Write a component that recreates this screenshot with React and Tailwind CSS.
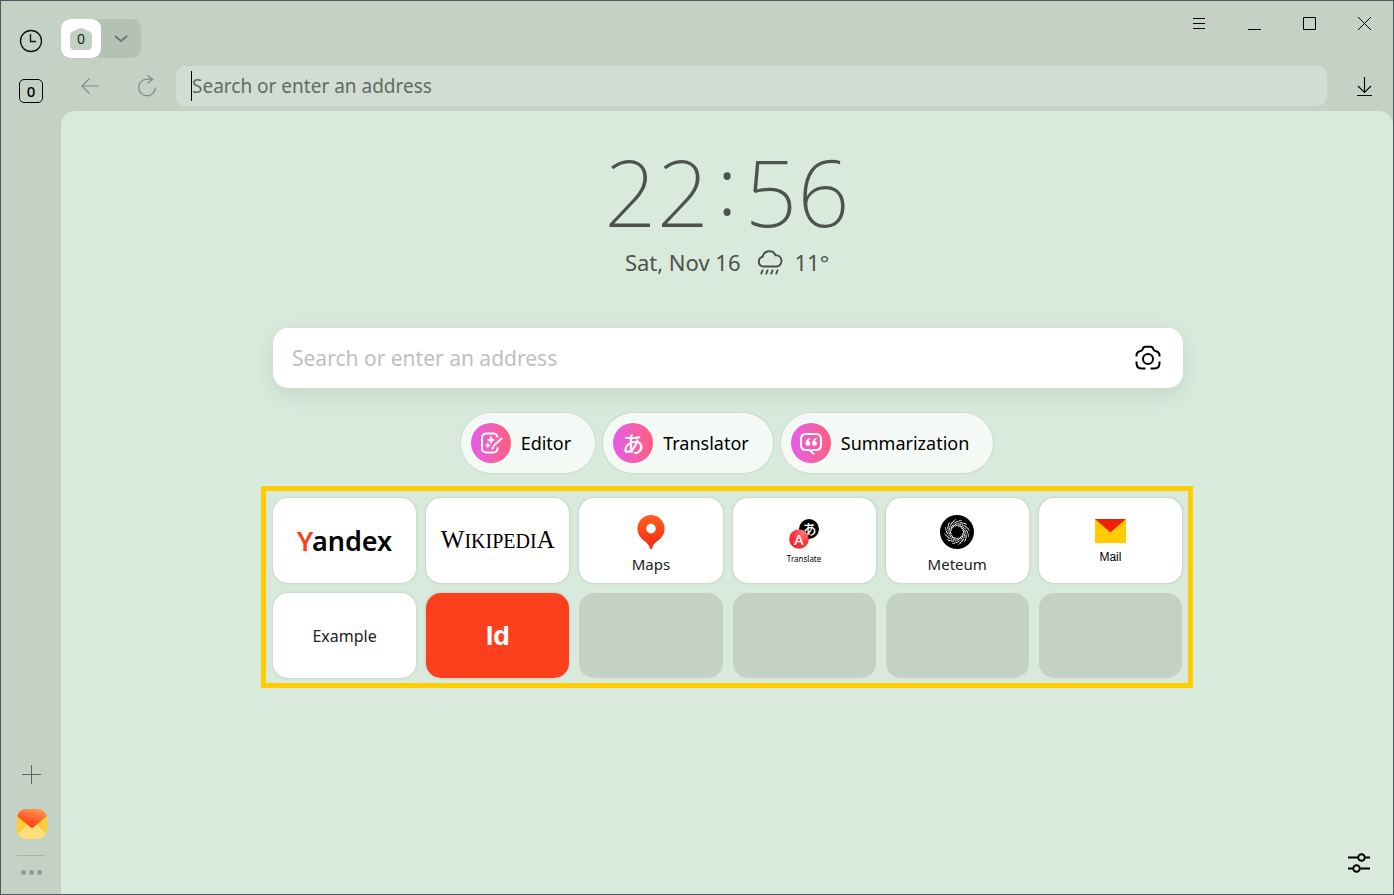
import React from "react";

const NOTO = "font-['Noto_Sans','Noto_Sans_CJK_JP',sans-serif]";

const services = [
  { name: "Editor", icon: <EditorIcon /> },
  { name: "Translator", icon: <span className="text-[22px] leading-6 font-medium text-white">あ</span> },
  { name: "Summarization", icon: <QuoteIcon /> },
];

const emptyTiles = ["slot-9", "slot-10", "slot-11", "slot-12"];

function EditorIcon() {
  return (
    <svg width="24" height="24" viewBox="0 0 24 24" fill="none" stroke="#fff" strokeWidth="2" strokeLinecap="round">
      <path d="M18.500 17v.5a4 4 0 0 1-4 4H7a4 4 0 0 1-4-4v-11a4 4 0 0 1 4-4h7.500a4 4 0 0 1 3.800 3" />
      <path d="M22.500 7.500 15 14.500l-1.500 3" />
      <path d="M12 5.500q.4 3.100 3.500 3.500-3.100.4-3.500 3.500-.4-3.100-3.500-3.500 3.100-.4 3.500-3.500Z" fill="#fff" strokeWidth=".8" />
      <path d="M8.800 12q.2 2.300 2.500 2.500-2.300.2-2.500 2.500-.2-2.300-2.500-2.500 2.300-.2 2.500-2.500Z" fill="#fff" strokeWidth=".6" />
    </svg>
  );
}

function QuoteIcon() {
  return (
    <svg width="24" height="24" viewBox="0 0 24 24" fill="none" stroke="#fff" strokeWidth="2" strokeLinecap="round" strokeLinejoin="round">
      <path d="M9.500 19H7q-5 0-5-5V8q0-5 5-5h10q5 0 5 5v6q0 5-5 5h-3.500M9.500 19q2 0 2.800 1.600.7 1.400 2.200 2" />
      <path d="M10.800 7C8 7.800 6.600 10 6.600 12.500a2.400 2.400 0 1 0 2.900-2.400q0-1.400 1.700-2.200ZM17.300 7c-2.800.8-4.200 3-4.200 5.500a2.400 2.400 0 1 0 2.900-2.400q0-1.400 1.700-2.200Z" fill="#fff" stroke="none" />
    </svg>
  );
}

function MapPin() {
  return (
    <svg width="28" height="34" viewBox="0 0 28 34">
      <defs>
        <linearGradient id="pin" x1="0" y1="0" x2="0" y2="1">
          <stop offset="0" stopColor="#ff6122" />
          <stop offset="1" stopColor="#f5260f" />
        </linearGradient>
      </defs>
      <path
        fill="url(#pin)"
        fillRule="evenodd"
        d="M14 0a13.600 13.600 0 0 0-13.600 13.600c0 3.800 1.500 7.200 4 9.600 2.400 2.500 7.800 5.600 8.300 9.500.1.700.6 1.300 1.300 1.300s1.200-.6 1.300-1.300c.5-3.900 5.900-7 8.300-9.500a13.600 13.600 0 0 0 4-9.600A13.600 13.600 0 0 0 14 0Zm0 18.400a4.800 4.800 0 1 1 0-9.600 4.800 4.800 0 0 1 0 9.600Z"
      />
    </svg>
  );
}

function Swirl() {
  const arms = Array.from({ length: 12 }, (_, i) => (i * 360) / 12);
  return (
    <svg width="34" height="34" viewBox="0 0 34 34">
      <circle cx="17" cy="17" r="17" fill="#000" />
      {arms.map((angle) => (
        <path
          key={angle}
          d="M18 11.200C23 10.500 28 14 28.500 22"
          transform={`rotate(${angle} 17 17)`}
          fill="none"
          stroke="#fff"
          strokeWidth="1"
          strokeDasharray="4 .5 2 .6 1.500 .7"
        />
      ))}
      <circle cx="17" cy="17" r="5.500" fill="#000" />
    </svg>
  );
}

function Tile({ label, href = "#", className = "bg-white", children }) {
  return (
    <a
      href={href}
      aria-label={label}
      className={`flex h-[85px] flex-col items-center rounded-[15px] shadow-[0_0_2px_1px_#c5d9c9] ${className}`}
    >
      {children}
    </a>
  );
}

function Sidebar() {
  return (
    <aside className="flex w-[60px] shrink-0 flex-col items-center">
      <button aria-label="History" className="mt-7">
        <svg width="24" height="24" viewBox="0 0 24 24" fill="none" stroke="#111" strokeWidth="1.300">
          <circle cx="12" cy="12" r="10.500" />
          <path d="M11.500 5v7.500h5.500" />
        </svg>
      </button>
      <button className="mt-[26px] flex h-6 w-6 items-center justify-center rounded-[5px] border border-black text-[15px] leading-5 font-medium text-black">
        0
      </button>
      <button aria-label="Add" className="mt-auto">
        <svg width="20" height="20" viewBox="0 0 20 20" stroke="#5d665e" strokeWidth="1">
          <path d="M10.500 0v19M1 9.500h19" />
        </svg>
      </button>
      <button aria-label="Mail" className="mt-6">
        <svg width="32" height="30" viewBox="-2 0 32 30">
          <defs>
            <linearGradient id="flap" x1="0.300" y1="1" x2="0.800" y2="0">
              <stop offset="0" stopColor="#ff4316" />
              <stop offset="0.400" stopColor="#ff5a26" />
              <stop offset="1" stopColor="#ff9c5c" />
            </linearGradient>
            <clipPath id="mailClip">
              <rect width="30" height="30" rx="9" />
            </clipPath>
          </defs>
          <g clipPath="url(#mailClip)">
            <path fill="#ffcc33" d="M0 0h30v30H0z" />
            <path fill="#ffdd7d" d="M0 26 11 15h8l11 11v4H0z" />
            <path fill="url(#flap)" d="M0 0h30v7L16.500 18.300q-1.500 1.300-3 0L0 7z" />
          </g>
        </svg>
      </button>
      <div className="mt-4 h-px w-7 bg-[#a9b5aa]" />
      <button aria-label="More" className="mt-[14px] mb-[19px] flex gap-[3px]">
        <span className="h-[5px] w-[5px] rounded-full bg-[#929d93]" />
        <span className="h-[5px] w-[5px] rounded-full bg-[#929d93]" />
        <span className="h-[5px] w-[5px] rounded-full bg-[#929d93]" />
      </button>
    </aside>
  );
}

function TopBar() {
  const windowButton = "flex h-11 w-[55px] items-center justify-center";
  return (
    <header>
      <div className="flex h-[65px] justify-between">
        <div className="mt-[18px] flex h-[39px] w-20 overflow-hidden rounded-[9px] bg-[#b4c1b5]">
          <button className="relative flex w-10 items-center justify-center rounded-[9px] bg-white">
            <svg width="22" height="22" viewBox="0 0 22 22" fill="#c2d0c4" className="absolute">
              <path d="M11 0q1 0 2 .6l6.500 3q2.500 1 2.500 4V17q0 5-5 5H5q-5 0-5-5V7.600q0-3 2.500-4L9 .6Q10 0 11 0Z" />
            </svg>
            <span className="relative text-[14px] leading-5 text-[#222]">0</span>
          </button>
          <button aria-label="Tab list" className="flex w-10 items-center justify-center">
            <svg width="14" height="8" viewBox="0 0 14 8" fill="none" stroke="#6c776d" strokeWidth="2" strokeLinecap="round">
              <path d="m1.500 1.500 5.500 4.500 5.500-4.500" />
            </svg>
          </button>
        </div>
        <div className="flex pr-px">
          <button aria-label="Menu" className={windowButton}>
            <svg width="13" height="12" viewBox="0 0 13 12" stroke="#000"><path d="M0 1.500h12M0 6.500h12M0 11.500h12" /></svg>
          </button>
          <button aria-label="Minimize" className={windowButton}>
            <svg width="13" height="13" viewBox="0 0 13 13" stroke="#000"><path d="M0 12.500h13" /></svg>
          </button>
          <button aria-label="Maximize" className={windowButton}>
            <svg width="13" height="13" viewBox="0 0 13 13" fill="none" stroke="#000"><path d="M.5.500h12v12H.5z" /></svg>
          </button>
          <button aria-label="Close" className={windowButton}>
            <svg width="13" height="13" viewBox="0 0 13 13" stroke="#000"><path d="m0 0 13 13M13 0 0 13" /></svg>
          </button>
        </div>
      </div>
      <div className="flex h-10">
        <div className="grid w-[115px] shrink-0 grid-cols-2">
          <button aria-label="Back" className="flex items-center justify-center">
            <svg width="18" height="16" viewBox="0 0 18 16" fill="none" stroke="#808c82" strokeWidth="1.200">
              <path d="M18 8H1.500M8.500.500 1 8l7.500 7.500" />
            </svg>
          </button>
          <button aria-label="Reload" className="flex items-center justify-center">
            <svg width="18" height="22" viewBox="0 0 18 22" fill="none" stroke="#808c82" strokeWidth="1.300">
              <path d="M17.300 12.500A8.300 8.300 0 1 1 9 4.200h5M9.500 .5l5 3.700-5 4.200" />
            </svg>
          </button>
        </div>
        <div className="flex min-w-0 flex-1 items-center rounded-[9px] bg-[#d1dcd3] pl-[15px]">
          <div className="h-[30px] w-px bg-black" />
          <input
            aria-label="Address"
            placeholder="Search or enter an address"
            className="h-full min-w-0 flex-1 bg-transparent text-[19px] outline-none placeholder:text-[#626b63]"
          />
        </div>
        <button aria-label="Downloads" className="ml-2 flex w-[58px] items-center justify-center">
          <svg width="15" height="19" viewBox="0 0 15 19" fill="none" stroke="#000" strokeWidth="1.100">
            <path d="M7.500 0v15M1 9l6.500 6.500L14 9M0 18.500h15" />
          </svg>
        </button>
      </div>
    </header>
  );
}

function Clock() {
  return (
    <div className="flex flex-col items-center text-[#4b534c]">
      <div className="flex h-[108px] items-center text-[92px] leading-[108px] font-extralight">
        <span>22</span>
        <span className="px-2 pb-4 text-[80px] leading-[80px] font-light">:</span>
        <span>56</span>
      </div>
      <div className="flex items-center text-[22px] leading-8">
        <span>Sat, Nov 16</span>
        <svg width="26" height="26" viewBox="0 0 26 26" fill="none" stroke="#4b534c" strokeWidth="2" strokeLinecap="round" className="ml-4 mr-3">
          <path d="M6 17.500a5 5 0 0 1-.3-9.800A6.800 6.800 0 0 1 18.500 6.200a5.700 5.700 0 0 1 1.300 11.300Z" />
          <path d="m5.500 21.500-1.200 3M10.500 21.500l-1.200 3M15.500 21.500l-1.200 3M20.500 21.500l-1.200 3" />
        </svg>
        <span>11°</span>
      </div>
    </div>
  );
}

function Tableau() {
  return (
    <nav className="mt-[13px] grid grid-cols-6 gap-[10px] border-[5px] border-[#ffcc00] pt-[7px] pr-[6px] pb-[5px] pl-[7px]">
      <Tile label="Yandex">
        <span className="my-auto text-[27px] leading-9 font-semibold text-black">
          <span className="text-[#fc3f1d]">Y</span>andex
        </span>
      </Tile>
      <Tile label="Wikipedia">
        <span className="my-auto font-['Liberation_Serif',serif] text-[20px] leading-8 text-black">
          <span className="text-[25px]">W</span>IKIPEDI<span className="text-[25px]">A</span>
        </span>
      </Tile>
      <Tile label="Maps">
        <div className="mt-[17px] h-[34px]"><MapPin /></div>
        <span className="mt-[3px] text-[15px] leading-6 text-[#222]">Maps</span>
      </Tile>
      <Tile label="Translate">
        <svg width="30" height="30" viewBox="0 0 30 30" className="mt-[21px]">
          <defs>
            <radialGradient id="ball" cx="0.700" cy="0.200" r="0.800">
              <stop offset="0" stopColor="#ff7a7a" />
              <stop offset="0.600" stopColor="#ff3338" />
              <stop offset="1" stopColor="#f9282e" />
            </radialGradient>
          </defs>
          <circle cx="20" cy="10" r="10" fill="#000" />
          <text x="20.500" y="15" textAnchor="middle" fontSize="14" fontWeight="500" fill="#fff">あ</text>
          <circle cx="10" cy="20" r="9.800" fill="url(#ball)" />
          <text x="10" y="25.500" textAnchor="middle" fontSize="15" fontWeight="500" fill="#fff">A</text>
        </svg>
        <span className="mt-1 text-[8px] leading-3 text-black">Translate</span>
      </Tile>
      <Tile label="Meteum">
        <div className="mt-[17px] h-[34px]"><Swirl /></div>
        <span className="mt-[3px] text-[15px] leading-6 text-[#222]">Meteum</span>
      </Tile>
      <Tile label="Mail">
        <svg width="31" height="24" viewBox="0 0 31 24" className="mt-[21px]">
          <path fill="#ffcc00" d="M0 0h31v24H0z" />
          <path fill="#ee2200" d="M0 0h31L15.500 13.500z" />
        </svg>
        <span className="mt-1 font-['Liberation_Sans',sans-serif] text-[12px] leading-5 text-black">Mail</span>
      </Tile>
      <Tile label="Example">
        <span className="my-auto text-[16px] leading-6 text-[#222]">Example</span>
      </Tile>
      <Tile label="Id" className="bg-[#fc3f1d]">
        <span className="my-auto font-['Inter',sans-serif] text-[26px] leading-8 font-bold text-white">Id</span>
      </Tile>
      {emptyTiles.map((slot) => (
        <div key={slot} className="h-[85px] rounded-[15px] bg-[#c4d1c5]" />
      ))}
    </nav>
  );
}

const App = () => {
  return (
    <div className={`flex min-h-screen border border-[#4d5960] bg-[#c4d1c5] ${NOTO}`}>
      <Sidebar />
      <div className="flex min-w-0 flex-1 flex-col">
        <TopBar />
        <main className="mt-[5px] flex flex-1 flex-col rounded-t-[14px] bg-[#d9e9dc] pt-[27px]">
          <Clock />
          <div className="mx-auto mt-[50px] w-full max-w-[932px]">
            <div className="mr-[10px] ml-3 flex h-[60px] items-center rounded-[15px] bg-white pr-[22px] pl-[19px] shadow-[0_6px_20px_rgba(60,90,65,0.12)]">
              <input
                aria-label="Search"
                placeholder="Search or enter an address"
                className="h-full min-w-0 flex-1 bg-transparent text-[21px] outline-none placeholder:text-[#bfbfbf]"
              />
              <button aria-label="Search by image">
                <svg width="26" height="26" viewBox="0 0 26 26" fill="none" stroke="#000" strokeWidth="2" strokeLinecap="butt">
                  <path d="M1.500 11.500V10.500q0-3.200 2.700-4l2.300-.9q.8-.4 1.200-1.500Q8.400 1.700 10 1.700h6q1.600 0 2.300 2.400.4 1.100 1.200 1.500l2.300.9q2.700.8 2.700 4v1M1.500 16.500v1.500q0 5.500 5 5.500H10.500M24.500 16.500v1.500q0 5.500-5 5.500H15.500" />
                  <circle cx="13" cy="14" r="5" />
                </svg>
              </button>
            </div>
            <div className="mt-[25px] flex justify-center gap-2">
              {services.map((item) => (
                <button
                  key={item.name}
                  className="flex h-[60px] items-center gap-[10px] rounded-full bg-[#f4f9f5] pr-6 pl-[10px] text-[18px] leading-6 text-black shadow-[0_0_1px_1px_#cadccd]"
                >
                  <span className="flex h-10 w-10 items-center justify-center rounded-full bg-linear-to-r from-[#e55be8] to-[#ff5c7c]">
                    {item.icon}
                  </span>
                  {item.name}
                </button>
              ))}
            </div>
            <Tableau />
          </div>
          <button aria-label="Settings" className="mt-auto mr-[23px] mb-5 self-end">
            <svg width="22" height="22" viewBox="0 0 22 22" fill="none" stroke="#000" strokeWidth="1.900">
              <path d="M0 5.500h10M17.500 5.500H22M0 16.500h5M12.500 16.500H22" />
              <circle cx="13.500" cy="5.500" r="3.300" />
              <circle cx="8.500" cy="16.500" r="3.300" />
            </svg>
          </button>
        </main>
      </div>
    </div>
  );
};

export default App;
